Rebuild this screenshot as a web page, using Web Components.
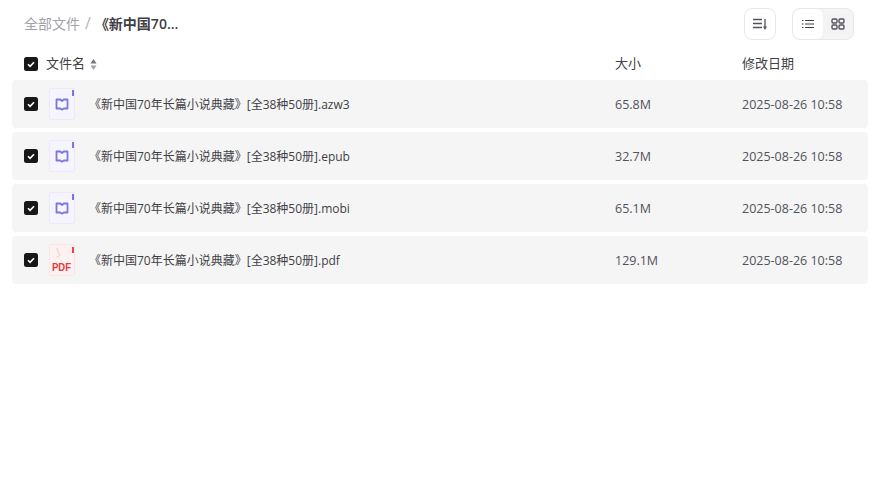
<!DOCTYPE html>
<html lang="zh-CN">
<head>
<meta charset="utf-8">
<title>全部文件</title>
<style>
	html, body { margin: 0; background: #fff; }
	body { font-family: "Open Sans", "Noto Sans CJK SC", sans-serif; }
</style>
</head>
<body>
<file-browser>
	<file-toolbar slot="toolbar" current="《新中国70..."></file-toolbar>
	<file-head slot="head"></file-head>
	<file-row type="book" name="《新中国70年长篇小说典藏》[全38种50册].azw3" size="65.8M" date="2025-08-26 10:58"></file-row>
	<file-row type="book" name="《新中国70年长篇小说典藏》[全38种50册].epub" size="32.7M" date="2025-08-26 10:58"></file-row>
	<file-row type="book" name="《新中国70年长篇小说典藏》[全38种50册].mobi" size="65.1M" date="2025-08-26 10:58"></file-row>
	<file-row type="pdf" name="《新中国70年长篇小说典藏》[全38种50册].pdf" size="129.1M" date="2025-08-26 10:58"></file-row>
</file-browser>
<script>
const CHECK = `<svg width="14" height="14" viewBox="0 0 14 14"><rect width="14" height="14" rx="2.5" fill="#18181b"/><path d="M4 7.2l2.1 2.1L10 5.2" fill="none" stroke="#fff" stroke-width="1.6"/></svg>`;

class FileBrowser extends HTMLElement {
	constructor() {
		super();
		this.attachShadow({ mode: 'open' });
		this.shadowRoot.innerHTML = `
			<style>
				:host { display: block; width: 878px; height: 495px; padding: 8px 10px 0 12px; box-sizing: border-box; }
				.rows { display: flex; flex-direction: column; gap: 4px; }
			</style>
			<slot name="toolbar"></slot>
			<slot name="head"></slot>
			<div class="rows"><slot></slot></div>
		`;
	}
}

class FileToolbar extends HTMLElement {
	constructor() {
		super();
		this.attachShadow({ mode: 'open' });
		this.shadowRoot.innerHTML = `
			<style>
				:host { display: flex; align-items: center; justify-content: space-between; height: 32px; padding: 0 14px 0 12px; font-size: 14px; }
				.crumbs { display: flex; align-items: center; margin-top: -2px; }
				.root { color: #a1a1aa; }
				.sep { color: #b4b4bb; font-size: 16px; margin: 0 4px 0 5px; }
				.cur { color: #3f3f46; font-weight: 600; }
				.tools { display: flex; gap: 16px; }
				.btn { width: 32px; height: 32px; box-sizing: border-box; border: 1px solid #e8e8ea; border-radius: 8px; display: flex; align-items: center; justify-content: center; background: #fff; }
				.group { display: flex; height: 32px; box-sizing: border-box; border: 1px solid #e8e8ea; border-radius: 8px; overflow: hidden; background: #f4f4f5; }
				.group div { width: 30px; display: flex; align-items: center; justify-content: center; }
				.group .on { background: #fff; border-radius: 7px; }
				svg { display: block; }
			</style>
			<div class="crumbs">
				<span class="root">全部文件</span><span class="sep">/</span><span class="cur"></span>
			</div>
			<div class="tools">
				<div class="btn">
					<svg width="16" height="16" viewBox="0 0 16 16" fill="none" stroke="#52525b" stroke-width="1.3">
						<path d="M1 3.500h9M1 7.500h9M1 11.500h9"/><path d="M13 3v9"/><path d="M11 10.500h4L13 14z" fill="#52525b" stroke="none"/>
					</svg>
				</div>
				<div class="group">
					<div class="on">
						<svg width="16" height="16" viewBox="0 0 16 16" fill="none" stroke="#3f3f46" stroke-width="1.2">
							<path d="M5 4.500h9M5 8h9M5 11.500h9M2 4.500h1.500M2 8h1.500M2 11.500h1.500"/>
						</svg>
					</div>
					<div>
						<svg width="16" height="16" viewBox="0 0 16 16" fill="none" stroke="#52525b" stroke-width="1.400">
							<rect x="2" y="3" width="5" height="4" rx="1.200"/><rect x="9" y="3" width="5" height="4" rx="1.200"/>
							<rect x="2" y="9" width="5" height="4" rx="1.200"/><rect x="9" y="9" width="5" height="4" rx="1.200"/>
						</svg>
					</div>
				</div>
			</div>
		`;
		this.shadowRoot.querySelector('.cur').textContent = this.getAttribute('current');
	}
}

class FileHead extends HTMLElement {
	constructor() {
		super();
		this.attachShadow({ mode: 'open' });
		this.shadowRoot.innerHTML = `
			<style>
				:host { display: grid; grid-template-columns: 591px 127px 1fr; align-items: center; height: 40px; padding: 8px 0 0 12px; font-size: 13px; color: #3f3f46; box-sizing: border-box; }
				.name { display: flex; align-items: center; gap: 8px; }
				svg { display: block; }
				.sort { margin-left: -3px; }
				.lbl { margin-top: -3px; }
			</style>
			<div class="name">
				${CHECK}
				<span class="lbl">文件名</span>
				<svg class="sort" width="7" height="11" viewBox="0 0 7 11"><path d="M3.500 0l3 4.500H.5z" fill="#71717a"/><path d="M3.500 11l3-4.500H.5z" fill="#a1a1aa"/></svg>
			</div>
			<div class="lbl">大小</div>
			<div class="lbl">修改日期</div>
		`;
	}
}

class FileRow extends HTMLElement {
	constructor() {
		super();
		this.attachShadow({ mode: 'open' });
		const pdf = this.getAttribute('type') === 'pdf';
		const icon = pdf ? `
			<svg width="26" height="32" viewBox="0 0 26 32">
				<rect x=".5" y=".5" width="25" height="31" rx="1.500" fill="#fdf1f1" stroke="#f8e6e6"/>
				<rect x="23" y="3" width="2" height="6" fill="#ef4444"/>
				<path d="M8 4c1 3 2 6 3 8-1 0-3 .5-4 1.500M8 4c0 2 .5 5 4 8" fill="none" stroke="#f4d4d4"/>
				<text x="12.500" y="27" text-anchor="middle" font-family="Liberation Sans, sans-serif" font-size="11" font-weight="700" fill="#e5383b" textLength="19" lengthAdjust="spacingAndGlyphs">PDF</text>
			</svg>` : `
			<svg width="26" height="32" viewBox="0 0 26 32">
				<rect x=".5" y=".5" width="25" height="31" rx="1.500" fill="#f6f5ff" stroke="#ebe9fb"/>
				<rect x="23" y="2" width="2" height="6" fill="#7b78dc"/>
				<path d="M7.500 11.500h3.800l1.700 1.500 1.700-1.500h3.800v9h-3.800l-1.700 1.200-1.700-1.200H7.500z" fill="none" stroke="#7b78dc" stroke-width="1.800" stroke-linejoin="round"/>
			</svg>`;
		this.shadowRoot.innerHTML = `
			<style>
				:host { display: grid; grid-template-columns: 591px 127px 1fr; align-items: center; height: 48px; background: #f5f5f5; border-radius: 4px; font-size: 12.5px; color: #52525b; padding-left: 12px; box-sizing: border-box; }
				.name { display: flex; align-items: center; font-size: 12px; color: #3f3f46; }
				svg { display: block; flex: none; }
				.ic { margin: 0 14px 0 11px; }
			</style>
			<div class="name">
				${CHECK}
				<span class="ic">${icon}</span>
				<span class="t"></span>
			</div>
			<div class="s"></div>
			<div class="d"></div>
		`;
		this.shadowRoot.querySelector('.t').textContent = this.getAttribute('name');
		this.shadowRoot.querySelector('.s').textContent = this.getAttribute('size');
		this.shadowRoot.querySelector('.d').textContent = this.getAttribute('date');
	}
}

customElements.define('file-browser', FileBrowser);
customElements.define('file-toolbar', FileToolbar);
customElements.define('file-head', FileHead);
customElements.define('file-row', FileRow);
</script>
</body>
</html>
